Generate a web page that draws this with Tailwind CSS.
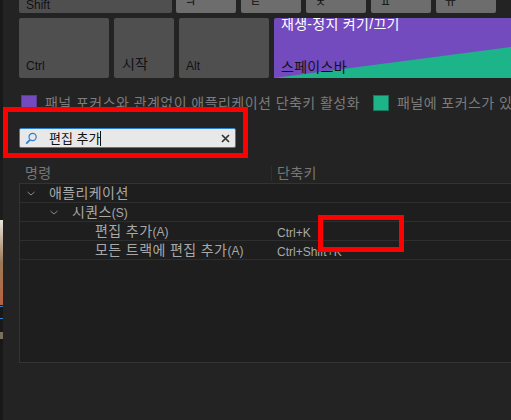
<!DOCTYPE html>
<html lang="ko">
<head>
    <meta charset="UTF-8">
    <title>키보드 단축키</title>
    <script src="https://cdn.jsdelivr.net/npm/@tailwindcss/browser@4"></script>
</head>
<body class="bg-[#232323] overflow-hidden font-['Liberation_Sans','Noto_Sans_CJK_KR',sans-serif]">
    <div class="relative w-[511px] h-[420px] flex overflow-hidden">
        <!-- 왼쪽 패널 가장자리 -->
        <div class="w-[3px] shrink-0 bg-[#181818] flex flex-col">
            <div class="h-[60px] mt-[160px] bg-[#1c1c1c]"></div>
            <div class="h-[85px] bg-gradient-to-b from-[#e9e4dc] via-[#9c7a58] to-[#b9603c]"></div>
            <div class="h-[13px] mt-[1px] border-y border-[#2d7fd0]"></div>
            <div class="h-[7px] mt-[13px] bg-[#77705f]"></div>
        </div>

        <div class="flex-1 flex flex-col pl-[16px] min-w-0">
            <!-- 키보드 -->
            <div class="flex gap-[5px] h-[13px] w-[520px]">
                <div class="w-[153px] -mr-[1px] bg-[#4f4f4f] rounded-b-[2px] pl-[7px] text-[12px] leading-[10px] text-[#111]">Shift</div>
                <div class="w-[60px] bg-[#6d6d6d] rounded-b-[2px] text-[12px] leading-[7px] text-[#111] pl-[9px]">ㅋ</div>
                <div class="w-[60px] bg-[#6d6d6d] rounded-b-[2px] text-[12px] leading-[7px] text-[#111] pl-[9px]">ㅌ</div>
                <div class="w-[60px] bg-[#6d6d6d] rounded-b-[2px] text-[12px] leading-[7px] text-[#111] pl-[9px]">ㅊ</div>
                <div class="w-[60px] bg-[#6d6d6d] rounded-b-[2px] text-[12px] leading-[7px] text-[#111] pl-[9px]">ㅍ</div>
                <div class="w-[60px] bg-[#6d6d6d] rounded-b-[2px] text-[12px] leading-[7px] text-[#111] pl-[9px]">ㅠ</div>
            </div>
            <div class="flex gap-[5px] h-[60px] mt-[5px] w-[492px]">
                <div class="w-[90px] bg-[#4f4f4f] rounded-[2px] flex items-end pl-[7px] pb-[3px] text-[12px] text-[#111]">Ctrl</div>
                <div class="w-[60px] bg-[#4f4f4f] rounded-[2px] flex items-end pl-[8px] pb-[3px] text-[14px] text-[#111]">시작</div>
                <div class="w-[90px] bg-[#4f4f4f] rounded-[2px] flex items-end pl-[7px] pb-[3px] text-[12px] text-[#111]">Alt</div>
                <div class="relative flex-1 bg-[#734bbf] rounded-tl-[2px] overflow-hidden">
                    <svg class="absolute inset-0" width="237" height="60" viewBox="0 0 237 60"><polygon points="0,60 237,29 237,60" fill="#1db48a"/></svg>
                    <div class="relative flex flex-col justify-between h-full pl-[7px] text-[14px] tracking-[0.3px] leading-[16px]">
                        <div class="text-white -mt-[2px]">재생-정지 켜기/끄기</div>
                        <div class="text-[#111] mb-[3px]">스페이스바</div>
                    </div>
                </div>
            </div>

            <!-- 범례 -->
            <div class="flex items-center h-[16px] mt-[17px] ml-[2px] text-[14px] tracking-[0.45px] text-[#7c7c7c] whitespace-nowrap w-[500px]">
                <span class="w-[16px] h-[16px] bg-[#734bbf] border border-[#5a3c96] shrink-0"></span>
                <span class="ml-[8px] w-[313px] shrink-0">패널 포커스와 관계없이 애플리케이션 단축키 활성화</span>
                <span class="w-[16px] h-[16px] bg-[#1db48a] border border-[#17785e] shrink-0 ml-[15px]"></span>
                <span class="ml-[8px]">패널에 포커스가 있</span>
            </div>

            <!-- 검색 -->
            <div class="flex items-center w-[217px] h-[20px] mt-[17px] px-[5px] bg-[#e8e8e8] border border-[#2d7fd0] rounded-[2px]">
                <svg width="13" height="13" viewBox="0 0 13 13" fill="none" stroke="#2b7fd6" class="shrink-0">
                    <circle cx="7.6" cy="5" r="3.6" stroke-width="1.2"/>
                    <line x1="5" y1="7.8" x2="1.2" y2="11.6" stroke-width="1.8"/>
                </svg>
                <span class="ml-[11px] text-[13px] text-[#111] leading-[15px] border-r border-[#111]">편집 추가</span>
                <svg width="9" height="9" viewBox="0 0 9 9" class="ml-auto" stroke="#333" stroke-width="1.7"><path d="M1 1l7 7M8 1l-7 7"/></svg>
            </div>

            <!-- 단축키 표 -->
            <div class="flex h-[20px] mt-[15px] items-center text-[14px] tracking-[0.4px] text-[#777]">
                <div class="w-[252px] pl-[6px] shrink-0">명령</div>
                <div class="w-[1px] h-[15px] bg-[#2e2e2e] shrink-0"></div>
                <div class="pl-[5px]">단축키</div>
            </div>
            <div class="flex-1 w-[492px] mb-[57px] bg-[#1e1e1e] border-l border-t border-b border-[#333] text-[12px] text-[#a8a8a8]">
                <div class="flex items-center h-[19px] border-b border-[#2e2e2e] pl-[7px]">
                    <svg width="8" height="5" viewBox="0 0 8 5" fill="none" stroke="#8a8a8a" class="shrink-0"><path d="M.5 1L4 4l3.5-3"/></svg>
                    <span class="ml-[14px] text-[14px] tracking-[0.4px]">애플리케이션</span>
                </div>
                <div class="flex items-center h-[19px] border-b border-[#2e2e2e] pl-[30px]">
                    <svg width="8" height="5" viewBox="0 0 8 5" fill="none" stroke="#8a8a8a" class="shrink-0"><path d="M.5 1L4 4l3.5-3"/></svg>
                    <span class="ml-[14px]"><span class="text-[14px] tracking-[0.4px]">시퀀스</span>(S)</span>
                </div>
                <div class="flex items-center h-[19px] border-b border-[#2e2e2e]">
                    <span class="w-[257px] pl-[75px] shrink-0"><span class="text-[14px] tracking-[0.4px]">편집 추가</span>(A)</span>
                    <span class="text-[12px] pt-[3px]">Ctrl+K</span>
                </div>
                <div class="flex items-center h-[19px] border-b border-[#2e2e2e]">
                    <span class="w-[257px] pl-[75px] shrink-0"><span class="text-[14px] tracking-[0.4px]">모든 트랙에 편집 추가</span>(A)</span>
                    <span class="text-[12px] pt-[3px]">Ctrl+Shift+K</span>
                </div>
            </div>
        </div>

        <!-- 빨간 표시 -->
        <div class="absolute left-[3px] top-[107px] w-[245px] h-[51px] border-[5px] border-[#fe0000]"></div>
        <div class="absolute left-[318px] top-[215px] w-[86px] h-[37px] border-[5px] border-[#fe0000]"></div>
    </div>
</body>
</html>
